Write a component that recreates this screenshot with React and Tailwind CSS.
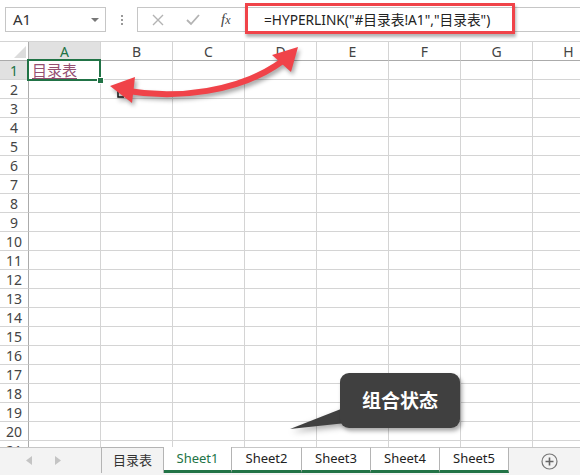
import React from 'react';

const COLS = ['A', 'B', 'C', 'D', 'E', 'F', 'G', 'H'];
const ROWS = Array.from({ length: 21 }, (_, i) => i + 1);
const SHEETS = ['Sheet1', 'Sheet2', 'Sheet3', 'Sheet4', 'Sheet5'];

const FormulaBar = () => (
    <div className="h-[41px] flex items-start pt-[7px] bg-white">
        <div className="ml-[5px] w-[101px] h-[25px] border border-[#c6c6c6] flex items-center justify-between pl-[7px] pr-[6px]">
            <span className="text-[15px] text-[#333] leading-none">A1</span>
            <span className="w-0 h-0 border-l-[4px] border-r-[4px] border-t-[4px] border-l-transparent border-r-transparent border-t-[#777]" />
        </div>
        <div className="w-[31px] h-[25px] flex flex-col items-center justify-center gap-[2px]">
            <span className="w-[2px] h-[2px] bg-[#999]" />
            <span className="w-[2px] h-[2px] bg-[#999]" />
            <span className="w-[2px] h-[2px] bg-[#999]" />
        </div>
        <div className="flex-1 h-[25px] border border-r-0 border-[#c6c6c6] flex items-center pl-[14px]">
            <svg width="12" height="12" viewBox="0 0 12 12">
                <path d="M1 1 L11 11 M11 1 L1 11" stroke="#b3b3b3" strokeWidth="1.4" fill="none" />
            </svg>
            <svg width="14" height="12" viewBox="0 0 14 12" className="ml-[22px]">
                <path d="M1 6 L5 10 L13 1" stroke="#b3b3b3" strokeWidth="1.8" fill="none" />
            </svg>
            <span className="ml-[21px] w-[17px] text-[15px] italic text-[#444] font-['Liberation_Serif',serif] leading-none">
                f<span className="text-[12px]">x</span>
            </span>
            <span className="ml-[26px] text-[13.7px] text-[#222] whitespace-nowrap leading-none">
                =HYPERLINK("#目录表!A1","目录表")
            </span>
        </div>
    </div>
);

const Grid = () => (
    <div className="relative h-[406px] overflow-hidden bg-white">
        <div className="flex h-[20px] border-t border-[#d4d4d4]">
            <div className="relative w-[29px] shrink-0 border-r border-b border-[#ababab]">
                <svg className="absolute right-[2px] bottom-[2px]" width="12" height="12" viewBox="0 0 12 12">
                    <path d="M12 0 L12 12 L0 12 Z" fill="#dcdcdc" />
                </svg>
            </div>
            {COLS.map(c => (
                <div
                    key={c}
                    className={c === 'A'
                        ? 'w-[72px] shrink-0 border-r border-b border-r-[#d4d4d4] border-b-[#ababab] bg-[#e1e1e1] text-[#217346] flex items-center justify-center text-[14px]'
                        : 'w-[72px] shrink-0 border-r border-b border-r-[#d4d4d4] border-b-[#ababab] text-[#444] flex items-center justify-center text-[14px]'}
                >
                    {c}
                </div>
            ))}
        </div>
        {ROWS.map(r => (
            <div key={r} className="flex h-[19px]">
                <div
                    className={r === 1
                        ? 'w-[29px] shrink-0 border-r border-r-[#ababab] border-b border-b-[#d4d4d4] bg-[#e1e1e1] text-[#217346] flex items-center justify-center text-[14px]'
                        : 'w-[29px] shrink-0 border-r border-r-[#ababab] border-b border-b-[#d4d4d4] text-[#444] flex items-center justify-center text-[14px]'}
                >
                    {r}
                </div>
                {COLS.map(c => (
                    <div key={c} className="w-[72px] shrink-0 border-r border-b border-[#d4d4d4] flex items-center pl-[3px]">
                        {r === 1 && c === 'A' && (
                            <span className="text-[15px] leading-none text-[#954f72] underline underline-offset-2">目录表</span>
                        )}
                    </div>
                ))}
            </div>
        ))}
        {/* selection frame on A1 */}
        <div className="absolute left-[27px] top-[18px] w-[74px] h-[22px] border-2 border-[#217346]" />
        <div className="absolute left-[97px] top-[36px] w-[7px] h-[7px] bg-[#217346] border border-white" />
    </div>
);

const TabBar = () => (
    <div className="h-[28px] flex items-start bg-[#f3f3f3] text-[13px]">
        <div className="w-[101px] h-[26px] border-t border-[#c6c6c6] flex items-center">
            <svg width="6" height="9" viewBox="0 0 6 9" className="ml-[26px]">
                <path d="M6 0 L0 4.5 L6 9 Z" fill="#c4c4c4" />
            </svg>
            <svg width="6" height="9" viewBox="0 0 6 9" className="ml-[23px]">
                <path d="M0 0 L6 4.5 L0 9 Z" fill="#c4c4c4" />
            </svg>
        </div>
        <div className="w-[63px] h-[26px] border-t border-l border-r border-[#b4b4b4] flex items-center justify-center text-[#333]">
            目录表
        </div>
        {SHEETS.map((s, i) => (
            <div
                key={s}
                className={i === 0
                    ? 'w-[68px] h-[26px] bg-white border-r border-[#b4b4b4] border-b-[3px] border-b-[#217346] flex items-center justify-center text-[#217346]'
                    : i === 1
                        ? 'w-[70px] h-[26px] bg-white border-t border-t-[#c6c6c6] border-r border-r-[#b4b4b4] border-b-[3px] border-b-[#217346] flex items-center justify-center text-[#222]'
                        : 'w-[69px] h-[26px] bg-white border-t border-t-[#c6c6c6] border-r border-r-[#b4b4b4] border-b-[3px] border-b-[#217346] flex items-center justify-center text-[#222]'}
            >
                {s}
            </div>
        ))}
        <div className="flex-1 h-[26px] border-t border-[#c6c6c6] flex items-center">
            <svg width="17" height="17" viewBox="0 0 17 17" className="ml-[32px] mt-[1px]">
                <circle cx="8.5" cy="8.5" r="7.5" fill="none" stroke="#777" strokeWidth="1.2" />
                <path d="M8.5 4.5 V12.5 M4.5 8.5 H12.5" stroke="#666" strokeWidth="1.6" />
            </svg>
        </div>
    </div>
);

const App = () => (
    <div className="relative w-[580px] h-[475px] overflow-hidden bg-white font-['Noto_Sans','Noto_Sans_CJK_SC',sans-serif]">
        <FormulaBar />
        <Grid />
        <TabBar />

        {/* red highlight around the formula */}
        <div className="absolute left-[245px] top-[3px] w-[270px] h-[31px] border-[3px] border-[#f04349] shadow-[1px_3px_3px_rgba(0,0,0,0.3)]" />

        {/* curved double arrow */}
        <svg className="absolute left-0 top-0 pointer-events-none drop-shadow-[2px_3px_2px_rgba(0,0,0,0.35)]" width="580" height="475" viewBox="0 0 580 475">
            <path d="M116 89 H125 V93 M118 87 V97 H124" stroke="#111" strokeWidth="1.5" fill="none" />
            <path d="M128 91 C175 99 240 93 284 60" stroke="#f04349" strokeWidth="6" fill="none" />
            <polygon points="110,86 135,77 132,103" fill="#f04349" />
            <polygon points="298,47 272,55 291,72" fill="#f04349" />
        </svg>

        {/* callout */}
        <svg className="absolute left-0 top-0 pointer-events-none drop-shadow-[2px_3px_3px_rgba(0,0,0,0.35)]" width="580" height="475" viewBox="0 0 580 475">
            <polygon points="346,407 290,429 346,423" fill="#404040" />
        </svg>
        <div className="absolute left-[340px] top-[373px] w-[120px] h-[55px] rounded-[9px] bg-[#404040] shadow-[2px_3px_4px_rgba(0,0,0,0.35)] flex items-center justify-center">
            <span className="text-white text-[19px] font-bold font-['Noto_Sans_CJK_SC',sans-serif]">组合状态</span>
        </div>
    </div>
);

export default App;
